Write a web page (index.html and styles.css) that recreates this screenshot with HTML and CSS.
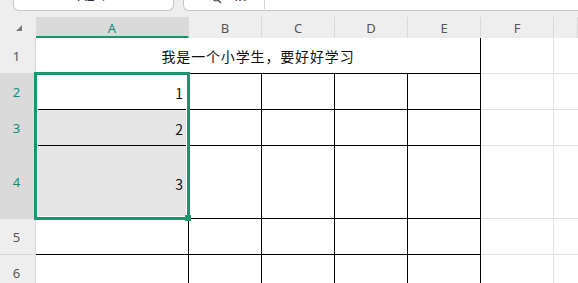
FILE: index.html
```html
<!DOCTYPE html>
<html lang="zh-CN">
<head>
    <meta charset="UTF-8">
    <title>表格</title>
    <link rel="stylesheet" href="styles.css">
</head>
<body>
    <div class="toolbar">
        <div class="name-box"><span class="clip-text">A2 ⌵</span></div>
        <div class="formula-box">
            <span class="fx-tools">
                <svg class="search-icon" width="10" height="10" viewBox="0 0 10 10"><circle cx="4" cy="4" r="3" fill="none" stroke="#444" stroke-width="1.2"/><path d="M6.2 6.2 L9 9" stroke="#444" stroke-width="1.3"/></svg>
                <span class="clip-text">fx</span>
            </span>
            <span class="fx-divider"></span>
        </div>
    </div>

    <div class="sheet">
        <div class="corner"><span class="corner-mark"></span></div>
        <div class="col-head active">A</div>
        <div class="col-head">B</div>
        <div class="col-head">C</div>
        <div class="col-head">D</div>
        <div class="col-head">E</div>
        <div class="col-head">F</div>
        <div class="col-head"></div>

        <div class="row-head">1</div>
        <div class="cell ruled merged">我是一个小学生，要好好学习</div>
        <div class="cell"></div>
        <div class="cell last"></div>

        <div class="row-head active">2</div>
        <div class="cell ruled num">1</div>
        <div class="cell ruled"></div>
        <div class="cell ruled"></div>
        <div class="cell ruled"></div>
        <div class="cell ruled"></div>
        <div class="cell"></div>
        <div class="cell last"></div>

        <div class="row-head active">3</div>
        <div class="cell ruled num picked">2</div>
        <div class="cell ruled"></div>
        <div class="cell ruled"></div>
        <div class="cell ruled"></div>
        <div class="cell ruled"></div>
        <div class="cell"></div>
        <div class="cell last"></div>

        <div class="row-head active">4</div>
        <div class="cell ruled num picked">3</div>
        <div class="cell ruled"></div>
        <div class="cell ruled"></div>
        <div class="cell ruled"></div>
        <div class="cell ruled"></div>
        <div class="cell"></div>
        <div class="cell last"></div>

        <div class="row-head">5</div>
        <div class="cell ruled"></div>
        <div class="cell ruled"></div>
        <div class="cell ruled"></div>
        <div class="cell ruled"></div>
        <div class="cell ruled"></div>
        <div class="cell"></div>
        <div class="cell last"></div>

        <div class="row-head">6</div>
        <div class="cell ruled"></div>
        <div class="cell ruled"></div>
        <div class="cell ruled"></div>
        <div class="cell ruled"></div>
        <div class="cell ruled"></div>
        <div class="cell"></div>
        <div class="cell last"></div>

        <div class="selection"><span class="fill-handle"></span></div>
    </div>
</body>
</html>
```

FILE: styles.css
```css
* {
    box-sizing: border-box;
    margin: 0;
    padding: 0;
}

body {
    width: 578px;
    height: 283px;
    overflow: hidden;
    background: #eeeeee;
    font-family: "Noto Sans", "Noto Sans CJK SC", sans-serif;
}

/* 顶部编辑栏（只露出底边） */
.toolbar {
    height: 17px;
    display: flex;
    align-items: flex-start;
    gap: 9px;
    padding-left: 13px;
    background: #eeeeee;
}

.name-box,
.formula-box {
    height: 11px;
    background: #fff;
    border: 1px solid #c6c6c6;
    border-top: none;
    border-radius: 0 0 6px 6px;
    overflow: hidden;
    display: flex;
}

.name-box {
    width: 161px;
    justify-content: center;
}

.formula-box {
    flex: 1;
    border-right: none;
    border-radius: 0 0 0 6px;
    padding-left: 28px;
}

.clip-text {
    font-size: 14px;
    line-height: 14px;
    color: #333;
    margin-top: -11px;
}

.fx-tools {
    display: flex;
    gap: 12px;
    width: 52px;
}

.search-icon {
    margin-top: -6px;
}

.fx-divider {
    width: 1px;
    height: 9px;
    background: #d0d0d0;
}

/* 表格区域 */
.sheet {
    position: relative;
    display: grid;
    grid-template-columns: 36px 153px 73px 73px 73px 73px 73px 1fr;
    grid-template-rows: 21px 36px 36px 36px 73px 36px 36px;
    background: #fff;
}

.corner {
    background: #eeeeee;
    display: flex;
    justify-content: center;
    align-items: center;
    padding: 1px 0 0 2px;
}

.corner-mark {
    width: 0;
    height: 0;
    border-left: 6px solid transparent;
    border-bottom: 6px solid #7c7c7c;
}

.col-head {
    background: #eeeeee;
    border-right: 1px solid #d9d9d9;
    color: #555;
    font-size: 13px;
    display: flex;
    justify-content: center;
    align-items: center;
    padding-top: 1px;
}

.col-head.active {
    background: #dadada;
    color: #148a7d;
    border-right-color: #dadada;
    border-bottom: 2px solid #15986b;
    padding-top: 3px;
}

.row-head {
    background: #eeeeee;
    border-right: 1px solid #d8d8d8;
    border-bottom: 1px solid #d8d8d8;
    color: #555;
    font-size: 13px;
    display: flex;
    justify-content: center;
    align-items: center;
    padding-right: 2px;
}

.row-head.active {
    background: #dadada;
    color: #148a7d;
    border-bottom-color: #dadada;
}

.cell {
    background: #fff;
    border-right: 1px solid #e1e1e1;
    border-bottom: 1px solid #e1e1e1;
}

.cell.last {
    border-right: none;
}

.cell.ruled {
    border-right-color: #000;
    border-bottom-color: #000;
}

.cell.merged {
    grid-column: span 5;
    display: flex;
    justify-content: center;
    align-items: center;
    font-family: "Noto Sans CJK SC", sans-serif;
    font-size: 14px;
    letter-spacing: 0.85px;
    color: #111;
    padding-top: 1px;
}

.cell.num {
    display: flex;
    justify-content: flex-end;
    align-items: center;
    padding: 3px 5px 0 0;
    font-family: "Noto Sans CJK SC", sans-serif;
    font-size: 14px;
    color: #111;
}

.cell.picked {
    background: #e5e5e5;
}

/* 选区边框 */
.selection {
    position: absolute;
    left: 34px;
    top: 55px;
    width: 156px;
    height: 148px;
    border: 3px solid #15986b;
    box-shadow: inset 0 0 0 1px #fff;
    pointer-events: none;
}

.fill-handle {
    position: absolute;
    right: -4px;
    bottom: -4px;
    width: 6px;
    height: 6px;
    background: #15986b;
}
```
